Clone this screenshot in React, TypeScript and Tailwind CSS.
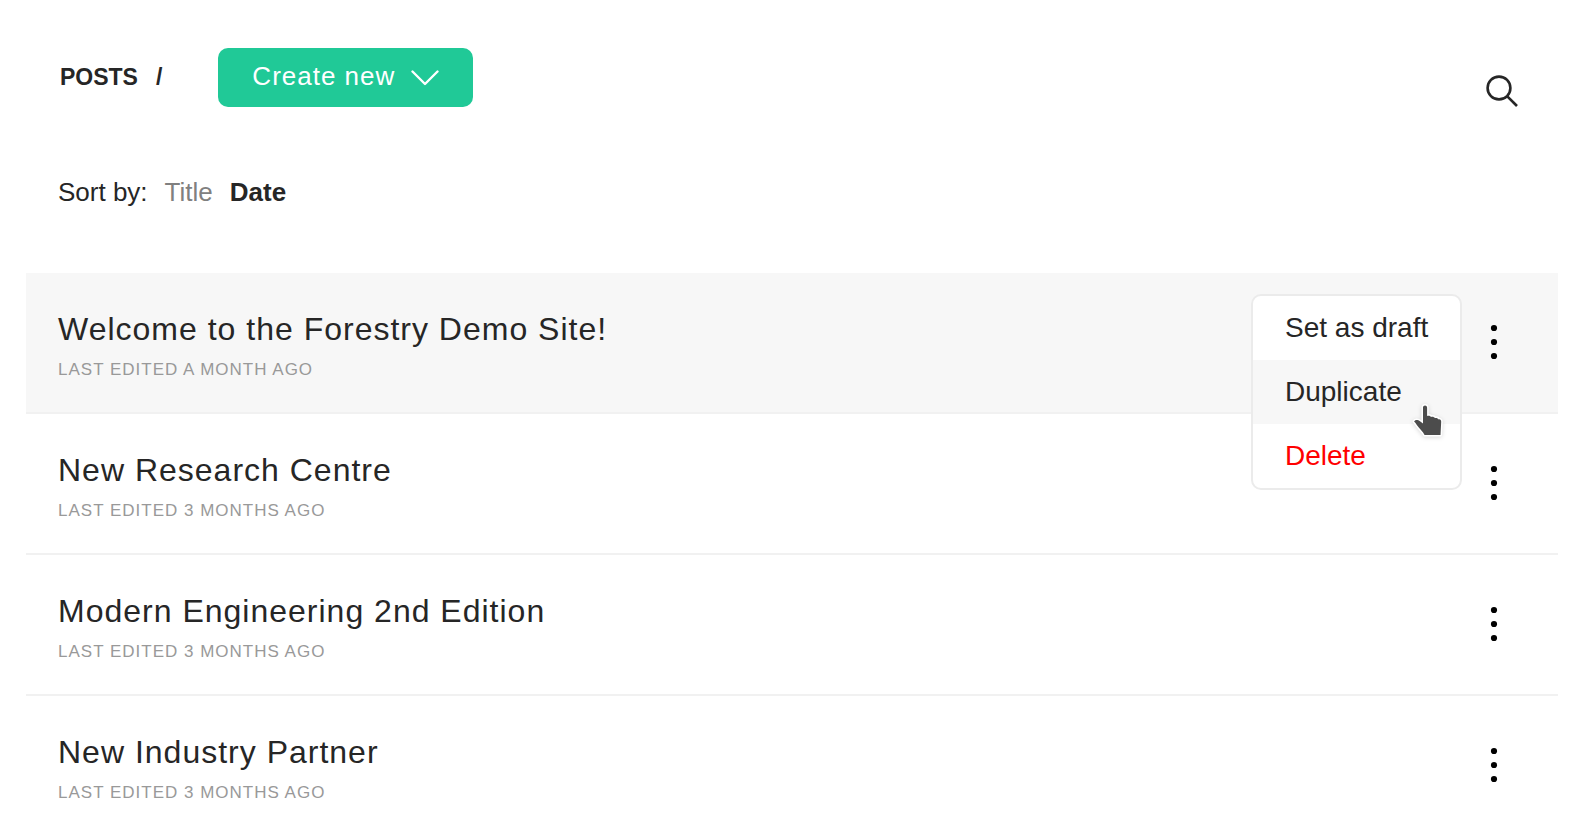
type Post = { title: string; edited: string; menuOpen?: boolean };

const posts: Post[] = [
  { title: "Welcome to the Forestry Demo Site!", edited: "Last edited a month ago", menuOpen: true },
  { title: "New Research Centre", edited: "Last edited 3 months ago" },
  { title: "Modern Engineering 2nd Edition", edited: "Last edited 3 months ago" },
  { title: "New Industry Partner", edited: "Last edited 3 months ago" },
];

function ChevronIcon() {
  return (
    <svg className="mt-1 h-4 w-7" viewBox="0 0 28 16" fill="none" stroke="currentColor" strokeWidth="2.4" strokeLinecap="round" strokeLinejoin="round" aria-hidden="true">
      <path d="M1.5 1.5 14 14 26.5 1.5" />
    </svg>
  );
}

function SearchIcon() {
  return (
    <svg className="size-8" viewBox="0 0 32 32" fill="none" stroke="currentColor" strokeWidth="2.6" aria-hidden="true">
      <circle cx="13" cy="13" r="11.4" />
      <path d="M21.3 21.3 31 31" />
    </svg>
  );
}

function DotsIcon() {
  return (
    <svg className="h-9 w-2" viewBox="0 0 8 36" fill="currentColor" aria-hidden="true">
      <circle cx="4" cy="4" r="3.1" />
      <circle cx="4" cy="18" r="3.1" />
      <circle cx="4" cy="32" r="3.1" />
    </svg>
  );
}

function HandPointer() {
  return (
    <svg className="pointer-events-none absolute right-3.5 top-26 h-10 w-9 drop-shadow-sm" viewBox="0 0 36 40" aria-hidden="true">
      <path
        d="M13 7.500c0-2.700 4-2.700 4.100 0v8.400c1.500-.6 3.300-.1 3.900 1 1.600-.6 3.300 0 3.900 1.200 1.500-.5 3 .1 3.600 1.300 1.700-.4 2.700.6 2.700 2.300l-.7 13.300H14.600c-1.400-3.300-5.700-6.800-7.600-9.800-1-1.500-2-2.600-2.900-3.600.8-2.300 3.900-2.100 5.900-.4l3 2.300Z"
        fill="#4c4c4c"
        stroke="#fff"
        strokeWidth="3"
        strokeLinejoin="round"
        paintOrder="stroke"
      />
    </svg>
  );
}

function ActionsMenu() {
  return (
    <div role="menu" className="absolute right-24 top-[21px] z-10 w-[211px] whitespace-nowrap rounded-[10px] border-2 border-[#ebebeb] bg-white text-[28px] leading-8">
      <button role="menuitem" className="block w-full rounded-t-lg px-8 py-4 text-left">Set as draft</button>
      <button role="menuitem" className="block w-full bg-[#f7f7f7] px-8 py-4 text-left">Duplicate</button>
      <button role="menuitem" className="block w-full rounded-b-lg px-8 py-4 text-left text-[#ff0000]">Delete</button>
      <HandPointer />
    </div>
  );
}

function PostRow({ post }: { post: Post }) {
  return (
    <li className={`relative flex items-center justify-between border-b-2 border-[#f1f1f1] pb-[30px] pl-8 pr-[60px] pt-9 ${post.menuOpen ? "bg-[#f7f7f7]" : ""}`}>
      <div>
        <h2 className="text-[32px] leading-10 tracking-[1px]">{post.title}</h2>
        <p className="pt-2 text-[17px] uppercase leading-[25px] tracking-[1px] text-[#999]">{post.edited}</p>
      </div>
      <button aria-label={`Actions for ${post.title}`} className="pb-2 text-black">
        <DotsIcon />
      </button>
      {post.menuOpen && <ActionsMenu />}
    </li>
  );
}

export default function App() {
  return (
    <main className="min-h-screen bg-white font-['Liberation_Sans',Arial,sans-serif] text-[#262626]">
      <header className="flex items-center justify-between pl-[60px] pr-[62px] pt-[47px]">
        <div className="flex items-center">
          <h1 className="text-[23px] font-bold leading-8">POSTS</h1>
          <span className="pl-[18px] text-[23px] font-bold leading-8">/</span>
          <button className="ml-14 flex items-center gap-4 rounded-[10px] bg-[#20c997] px-[34px] pb-[14px] pt-3 text-[26px] leading-[33px] tracking-[1px] text-white">
            Create new
            <ChevronIcon />
          </button>
        </div>
        <button aria-label="Search" className="mt-7">
          <SearchIcon />
        </button>
      </header>
      <div className="flex gap-[17px] pl-[58px] pt-[69px] text-[26px] leading-8">
        <span>Sort by:</span>
        <button className="text-[#808080]">Title</button>
        <button className="font-bold">Date</button>
      </div>
      <ul className="ml-[26px] mr-[22px] mt-[65px]">
        {posts.map((post) => (
          <PostRow key={post.title} post={post} />
        ))}
      </ul>
    </main>
  );
}
